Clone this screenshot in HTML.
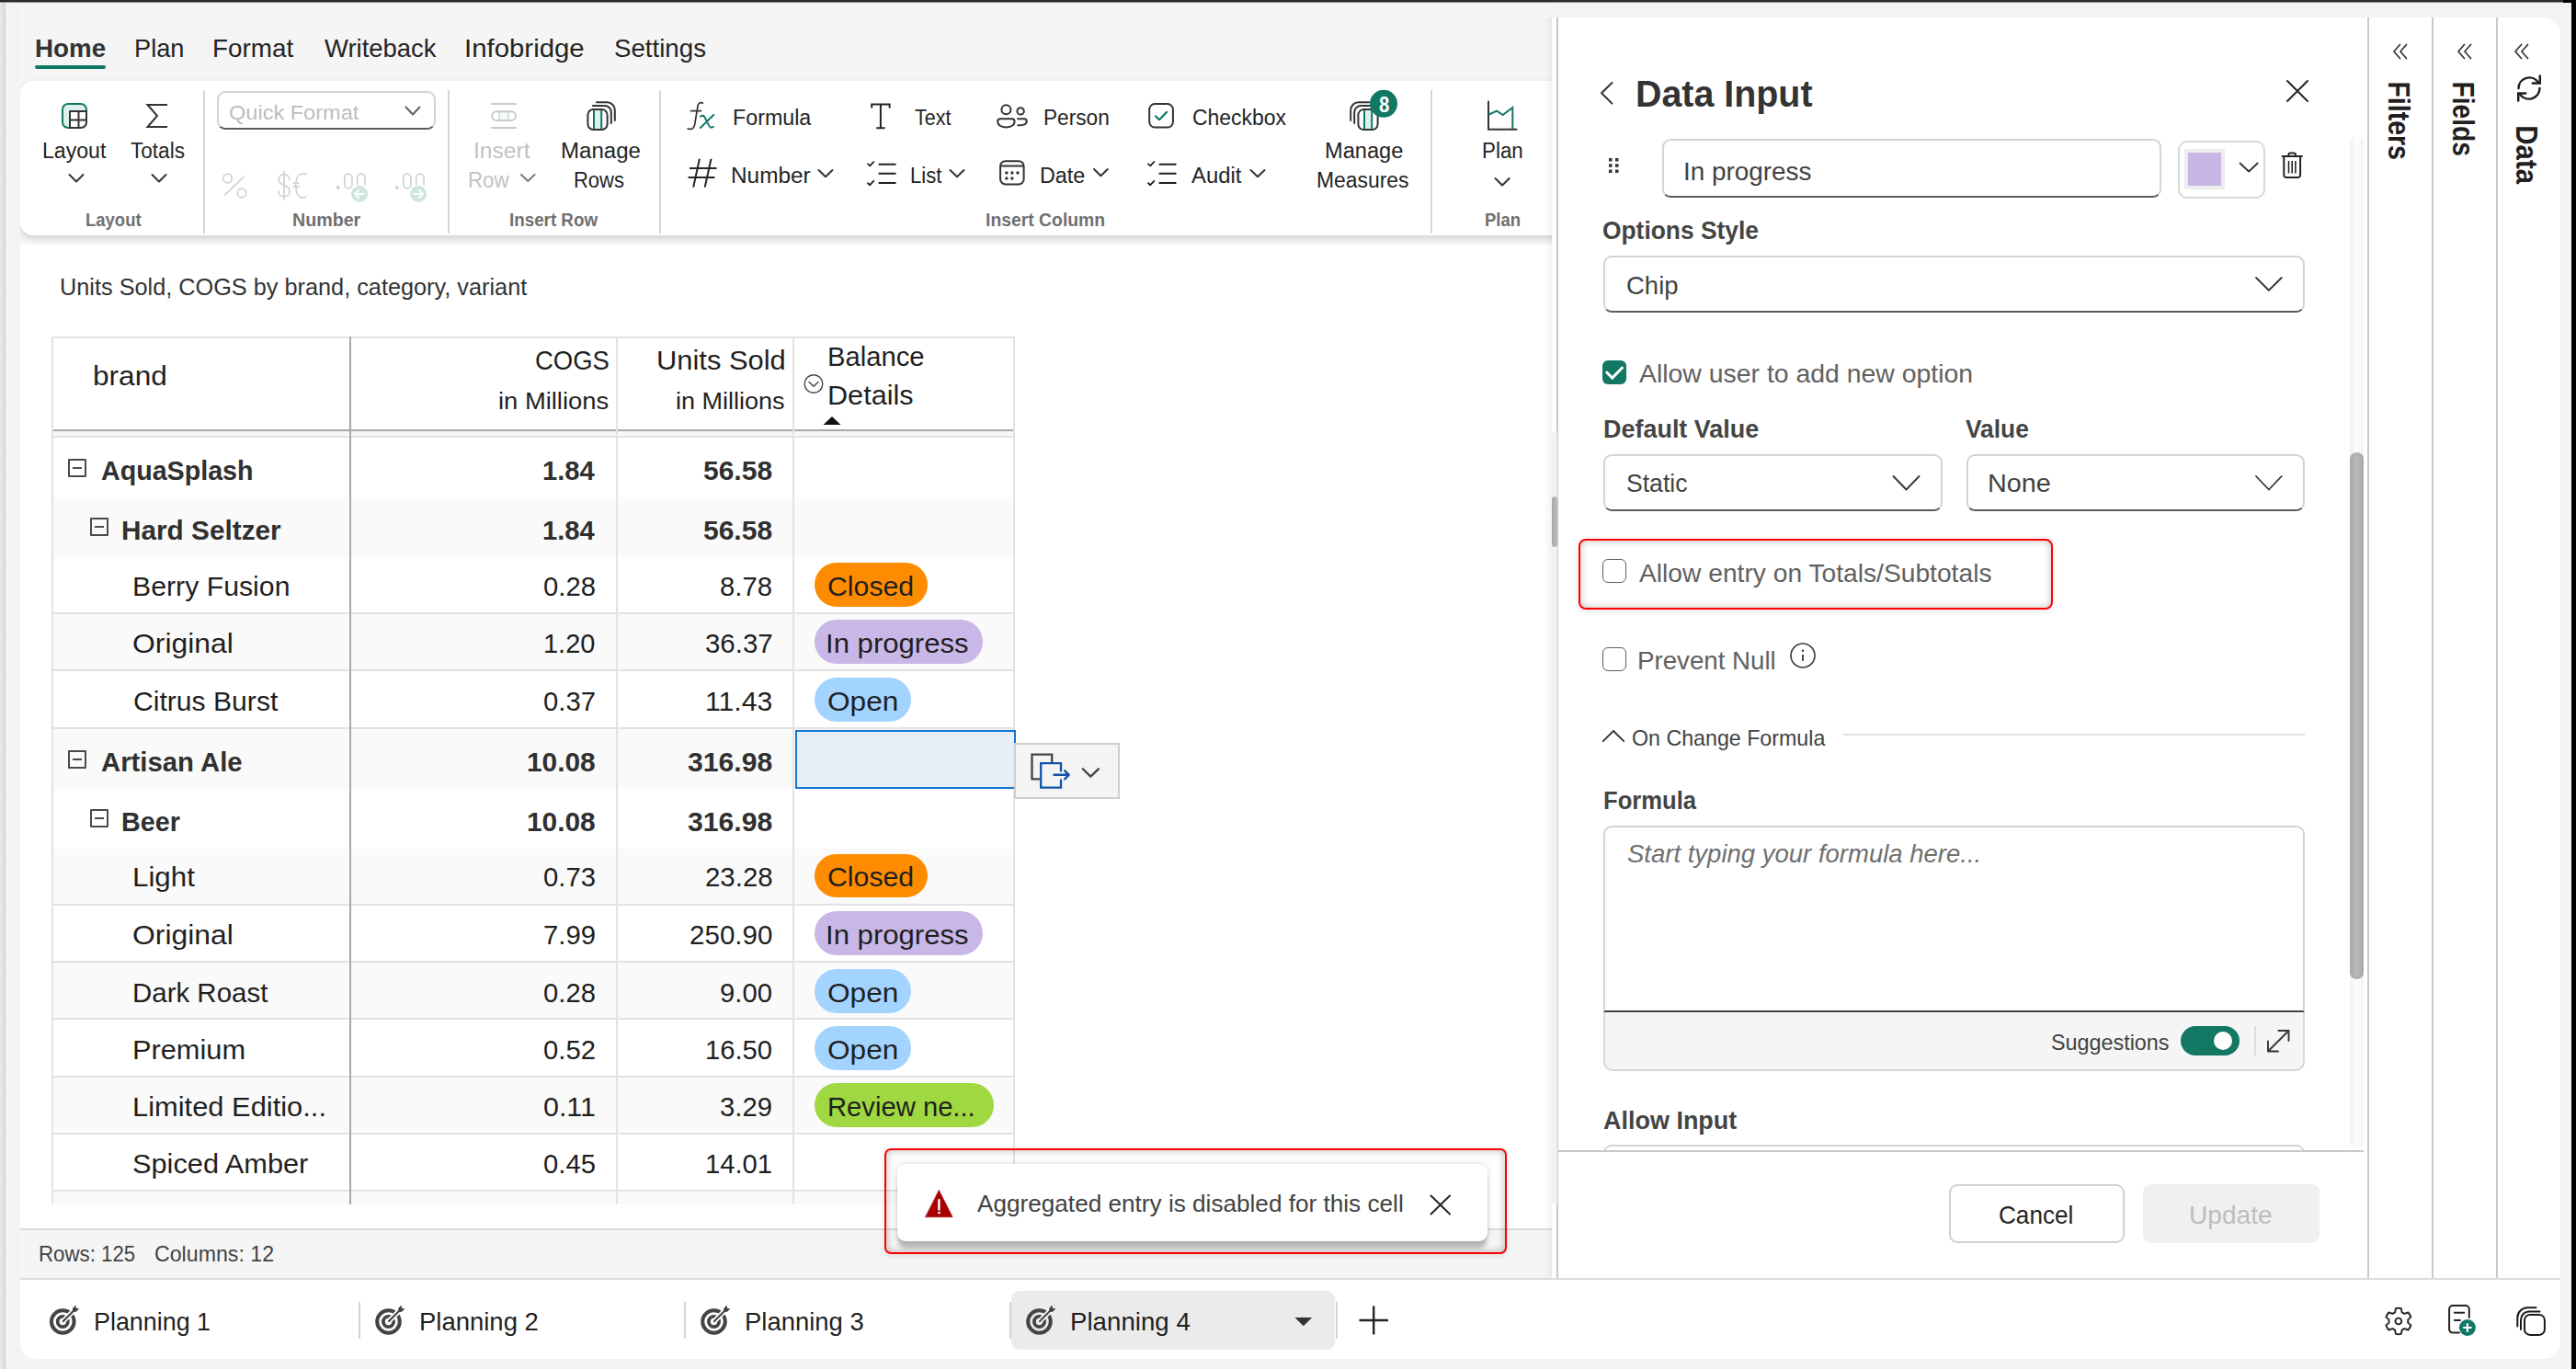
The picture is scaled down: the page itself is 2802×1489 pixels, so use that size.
<!DOCTYPE html>
<html><head><meta charset="utf-8"><title>Planning</title><style>
html,body{margin:0;padding:0;}
body{width:2802px;height:1489px;overflow:hidden;position:relative;background:#f3f3f3;font-family:"Liberation Sans", sans-serif;}
body>div,body>svg,body>span{position:absolute;box-sizing:border-box;}
.t{white-space:nowrap;transform-origin:0 50%;display:block;}
</style></head>
<body>
<div style="left:0px;top:0px;width:6px;height:1489px;background:linear-gradient(90deg,#e9e9e9,#e2e2e2 50%,#d4d4d4);"></div>
<div style="left:22px;top:3px;width:1666px;height:263px;background:#f5f5f5;"></div>
<div style="left:22px;top:70px;width:1666px;height:196px;overflow:hidden;"><div style="position:absolute;left:0;top:18px;width:1700px;height:168px;background:#fff;border-radius:14px 0 0 14px;box-shadow:0 3px 7px rgba(0,0,0,.15);"></div></div>
<div style="left:22px;top:266px;width:1666px;height:1072px;background:#fff;"></div>
<div style="left:22px;top:1336px;width:1666px;height:56px;background:#f5f5f5;border-top:2px solid #dcdcdc;border-bottom:2px solid #dcdcdc;"></div>
<div style="left:22px;top:1392px;width:2763px;height:86px;background:#fff;border-radius:0 0 18px 16px;"></div>
<div style="left:38px;top:71px;width:77px;height:4px;background:#117865;border-radius:2px;"></div>
<div style="left:221px;top:98px;width:2px;height:156px;background:#d6d6d6;"></div>
<div style="left:487px;top:98px;width:2px;height:156px;background:#d6d6d6;"></div>
<div style="left:717px;top:98px;width:2px;height:156px;background:#d6d6d6;"></div>
<div style="left:1556px;top:98px;width:2px;height:156px;background:#d6d6d6;"></div>
<div style="left:235.5px;top:99px;width:238.5px;height:42px;background:#fff;border:2px solid #d4d4d4;border-bottom-color:#5c5c5c;border-radius:9px;"></div>
<div style="left:58px;top:476px;width:1044px;height:65px;background:#fff;"></div>
<div style="left:58px;top:541px;width:1044px;height:65px;background:#fafafa;"></div>
<div style="left:58px;top:606px;width:1044px;height:62px;background:#fff;border-bottom:2px solid #e3e3e3;"></div>
<div style="left:58px;top:668px;width:1044px;height:62px;background:#fafafa;border-bottom:2px solid #e3e3e3;"></div>
<div style="left:58px;top:730px;width:1044px;height:63px;background:#fff;border-bottom:2px solid #e3e3e3;"></div>
<div style="left:58px;top:793px;width:1044px;height:65px;background:#fafafa;"></div>
<div style="left:58px;top:858px;width:1044px;height:65px;background:#fff;"></div>
<div style="left:58px;top:923px;width:1044px;height:62px;background:#fafafa;border-bottom:2px solid #e3e3e3;"></div>
<div style="left:58px;top:985px;width:1044px;height:62px;background:#fff;border-bottom:2px solid #e3e3e3;"></div>
<div style="left:58px;top:1047px;width:1044px;height:62px;background:#fafafa;border-bottom:2px solid #e3e3e3;"></div>
<div style="left:58px;top:1109px;width:1044px;height:63px;background:#fff;border-bottom:2px solid #e3e3e3;"></div>
<div style="left:58px;top:1172px;width:1044px;height:62px;background:#fafafa;border-bottom:2px solid #e3e3e3;"></div>
<div style="left:58px;top:1234px;width:1044px;height:62px;background:#fff;border-bottom:2px solid #e3e3e3;"></div>
<div style="left:58px;top:1296px;width:1044px;height:14px;background:#fafafa;"></div>
<div style="left:58px;top:469px;width:1044px;height:5px;background:#f7f7f7;"></div>
<div style="left:56px;top:474px;width:1048px;height:2px;background:#e3e3e3;"></div>
<div style="left:56px;top:467px;width:1048px;height:2px;background:#a8a8a8;"></div>
<div style="left:56px;top:366px;width:1048px;height:2px;background:#e3e3e3;"></div>
<div style="left:56px;top:366px;width:2px;height:944px;background:#e3e3e3;"></div>
<div style="left:1102px;top:366px;width:2px;height:944px;background:#e3e3e3;"></div>
<div style="left:670px;top:366px;width:2px;height:944px;background:#e3e3e3;"></div>
<div style="left:862px;top:366px;width:2px;height:944px;background:#e3e3e3;"></div>
<div style="left:380px;top:366px;width:2px;height:944px;background:#a8a8a8;"></div>
<div style="left:1100px;top:1404px;width:352px;height:64px;background:#ebebeb;border-radius:9px;"></div>
<div style="left:390px;top:1416px;width:2px;height:40px;background:#d4d4d4;"></div>
<div style="left:744px;top:1416px;width:2px;height:40px;background:#d4d4d4;"></div>
<div style="left:1098px;top:1416px;width:2px;height:40px;background:#d4d4d4;"></div>
<div style="left:1453px;top:1416px;width:2px;height:40px;background:#d4d4d4;"></div>
<div style="left:1688px;top:19px;width:1097px;height:1373px;background:#fff;border-radius:0 18px 0 0;"></div>
<div style="left:1680px;top:19px;width:8px;height:1371px;background:linear-gradient(90deg,rgba(0,0,0,0),rgba(0,0,0,.05));"></div>
<div style="left:1693px;top:19px;width:2px;height:1372px;background:#c8c8c8;"></div>
<div style="left:2575px;top:19px;width:2px;height:1372px;background:#cacaca;"></div>
<div style="left:2645px;top:19px;width:2px;height:1372px;background:#cacaca;"></div>
<div style="left:2715px;top:19px;width:2px;height:1372px;background:#cacaca;"></div>
<div style="left:1688px;top:469px;width:5.5px;height:841px;background:#f2f2f2;border-radius:3px;"></div>
<div style="left:1688px;top:539.5px;width:5.5px;height:55px;background:linear-gradient(90deg,#a9a9a9,#bcbcbc);border-radius:3px;"></div>
<div style="left:1807.5px;top:151px;width:543.5px;height:63.5px;background:#fff;border:2px solid #d4d4d4;border-bottom-color:#5c5c5c;border-radius:9px;"></div>
<div style="left:2368.5px;top:152.5px;width:95px;height:63px;background:#fff;border:2px solid #d8d8d8;border-radius:10px;"></div>
<div style="left:2376px;top:162px;width:44px;height:44px;background:#ededed;"></div>
<div style="left:2380px;top:166px;width:36px;height:36px;background:#c8b6e4;"></div>
<div style="left:1743.5px;top:278px;width:763.5px;height:61.5px;background:#fff;border:2px solid #d4d4d4;border-bottom-color:#5c5c5c;border-radius:9px;"></div>
<div style="left:1743px;top:392px;width:26px;height:26px;background:#127864;border-radius:6px;"></div>
<div style="left:1743.5px;top:493.5px;width:369.5px;height:62.5px;background:#fff;border:2px solid #d4d4d4;border-bottom-color:#5c5c5c;border-radius:9px;"></div>
<div style="left:2138.5px;top:493.5px;width:368.5px;height:62.5px;background:#fff;border:2px solid #d4d4d4;border-bottom-color:#5c5c5c;border-radius:9px;"></div>
<div style="left:1716.5px;top:586px;width:516px;height:77px;border:2px solid #ff0000;border-radius:8px;box-shadow:0 0 8px rgba(0,0,0,.25) inset, 0 2px 6px rgba(0,0,0,.10);"></div>
<div style="left:1743px;top:608px;width:26px;height:26px;background:#fff;border:1.500px solid #616161;border-radius:6px;"></div>
<div style="left:1743px;top:704px;width:26px;height:26px;background:#fff;border:1.500px solid #616161;border-radius:6px;"></div>
<div style="left:2005px;top:798px;width:502px;height:2px;background:#e0e0e0;"></div>
<div style="left:1743.5px;top:1100px;width:763.5px;height:64.5px;background:#f5f5f5;border:2px solid #d8d8d8;border-top:none;border-radius:0 0 10px 10px;"></div>
<div style="left:1743.5px;top:897.5px;width:763.5px;height:203.5px;background:#fff;border:2px solid #d4d4d4;border-bottom:2px solid #424242;border-radius:9px 9px 0 0;"></div>
<div style="left:2371.5px;top:1116px;width:64.5px;height:32px;background:#127864;border-radius:16px;"></div>
<div style="left:2408px;top:1122px;width:20px;height:20px;background:#fff;border-radius:10px;"></div>
<div style="left:2452px;top:1116px;width:2px;height:32px;background:#dcdcdc;"></div>
<div style="left:1743.5px;top:1245px;width:763.5px;height:30px;background:#fff;border:2px solid #d4d4d4;border-radius:9px;"></div>
<div style="left:2556px;top:147.5px;width:14.5px;height:1101.5px;background:linear-gradient(90deg,#f1f1f1,#fcfcfc 40%,#fcfcfc 60%,#f1f1f1);border-radius:7px;"></div>
<div style="left:2556px;top:492px;width:14.5px;height:573px;background:linear-gradient(90deg,#a8a8a8,#b8b8b8 50%,#a8a8a8);border-radius:7px;"></div>
<div style="left:886px;top:612.0px;width:123px;height:47.5px;background:#ff8c00;border-radius:24px;"></div>
<div style="left:886px;top:674.0px;width:183px;height:47.5px;background:#c9b8e7;border-radius:24px;"></div>
<div style="left:886px;top:737.0px;width:104.75px;height:47.5px;background:#a3d4ff;border-radius:24px;"></div>
<div style="left:886px;top:928.5px;width:123px;height:47.5px;background:#ff8c00;border-radius:24px;"></div>
<div style="left:886px;top:991.0px;width:183px;height:47.5px;background:#c9b8e7;border-radius:24px;"></div>
<div style="left:886px;top:1054.0px;width:104.75px;height:47.5px;background:#a3d4ff;border-radius:24px;"></div>
<div style="left:886px;top:1116.0px;width:104.75px;height:47.5px;background:#a3d4ff;border-radius:24px;"></div>
<div style="left:886px;top:1178.0px;width:194.5px;height:47.5px;background:#9fd840;border-radius:24px;"></div>
<div style="left:865px;top:794px;width:240px;height:64px;background:#e7eef8;border:2px solid #0f78d4;"></div>
<div style="left:1103px;top:808px;width:114.5px;height:61px;background:#f4f4f4;border:2px solid #cfcfcf;"></div>
<div style="left:1695px;top:1251px;width:880px;height:141px;background:#fff;"></div>
<div style="left:1695px;top:1251px;width:876px;height:2px;background:#c8c8c8;"></div>
<div style="left:2120px;top:1288px;width:190.5px;height:63.5px;background:#fff;border:2px solid #d1d1d1;border-radius:9px;"></div>
<div style="left:2331px;top:1288px;width:192px;height:63.5px;background:#f0f0f0;border-radius:9px;"></div>
<div style="left:1688px;top:1390px;width:1097px;height:2px;background:#dcdcdc;"></div>
<span class="t" style="left:38.01px;top:35px;font-size:28px;line-height:35px;color:#333;font-weight:700;transform:scaleX(0.9905);">Home</span>
<span class="t" style="left:146.06px;top:35px;font-size:28px;line-height:35px;color:#242424;transform:scaleX(0.9720);">Plan</span>
<span class="t" style="left:230.51px;top:35px;font-size:28px;line-height:35px;color:#242424;transform:scaleX(0.9954);">Format</span>
<span class="t" style="left:352.50px;top:35px;font-size:28px;line-height:35px;color:#242424;transform:scaleX(0.9803);">Writeback</span>
<span class="t" style="left:505.40px;top:35px;font-size:28px;line-height:35px;color:#242424;transform:scaleX(1.0495);">Infobridge</span>
<span class="t" style="left:668.01px;top:35px;font-size:28px;line-height:35px;color:#242424;transform:scaleX(0.9882);">Settings</span>
<span class="t" style="left:46.00px;top:149px;font-size:23px;line-height:30px;color:#242424;transform:scaleX(1.0049);">Layout</span>
<span class="t" style="left:142.00px;top:149px;font-size:23px;line-height:30px;color:#242424;transform:scaleX(0.9818);">Totals</span>
<span class="t" style="left:248.95px;top:108px;font-size:22.5px;line-height:29px;color:#bdbdbd;transform:scaleX(1.0462);">Quick Format</span>
<span class="t" style="left:93.08px;top:226px;font-size:20px;line-height:26px;color:#707070;font-weight:700;transform:scaleX(0.9245);">Layout</span>
<span class="t" style="left:318.02px;top:226px;font-size:20px;line-height:26px;color:#707070;font-weight:700;transform:scaleX(0.9828);">Number</span>
<span class="t" style="left:554.06px;top:226px;font-size:20px;line-height:26px;color:#707070;font-weight:700;transform:scaleX(0.9392);">Insert Row</span>
<span class="t" style="left:1072.03px;top:226px;font-size:20px;line-height:26px;color:#707070;font-weight:700;transform:scaleX(0.9680);">Insert Column</span>
<span class="t" style="left:1615.08px;top:226px;font-size:20px;line-height:26px;color:#707070;font-weight:700;transform:scaleX(0.9245);">Plan</span>
<span class="t" style="left:515.36px;top:149px;font-size:23px;line-height:30px;color:#c2c2c2;transform:scaleX(1.0689);">Insert</span>
<span class="t" style="left:509.03px;top:181px;font-size:23px;line-height:30px;color:#c2c2c2;transform:scaleX(0.9691);">Row</span>
<span class="t" style="left:609.95px;top:149px;font-size:23px;line-height:30px;color:#242424;transform:scaleX(1.0452);">Manage</span>
<span class="t" style="left:623.54px;top:181px;font-size:23px;line-height:30px;color:#242424;transform:scaleX(0.9552);">Rows</span>
<span class="t" style="left:796.99px;top:113px;font-size:23px;line-height:30px;color:#242424;transform:scaleX(1.0112);">Formula</span>
<span class="t" style="left:995.00px;top:113px;font-size:23px;line-height:30px;color:#242424;transform:scaleX(0.9348);">Text</span>
<span class="t" style="left:1135.02px;top:113px;font-size:23px;line-height:30px;color:#242424;transform:scaleX(0.9848);">Person</span>
<span class="t" style="left:1296.50px;top:113px;font-size:23px;line-height:30px;color:#242424;transform:scaleX(0.9973);">Checkbox</span>
<span class="t" style="left:794.94px;top:176px;font-size:23px;line-height:30px;color:#242424;transform:scaleX(1.0599);">Number</span>
<span class="t" style="left:990.04px;top:176px;font-size:23px;line-height:30px;color:#242424;transform:scaleX(0.9604);">List</span>
<span class="t" style="left:1131.48px;top:176px;font-size:23px;line-height:30px;color:#242424;transform:scaleX(1.0151);">Date</span>
<span class="t" style="left:1296.00px;top:176px;font-size:23px;line-height:30px;color:#242424;transform:scaleX(1.0371);">Audit</span>
<span class="t" style="left:1441.47px;top:149px;font-size:23px;line-height:30px;color:#242424;transform:scaleX(1.0267);">Manage</span>
<span class="t" style="left:1432.00px;top:181px;font-size:23px;line-height:30px;color:#242424;transform:scaleX(0.9951);">Measures</span>
<span class="t" style="left:1612.03px;top:149px;font-size:23px;line-height:30px;color:#242424;transform:scaleX(0.9719);">Plan</span>
<span class="t" style="left:65.06px;top:295px;font-size:26px;line-height:34px;color:#333;transform:scaleX(0.9724);">Units Sold, COGS by brand, category, variant</span>
<span class="t" style="left:101.45px;top:390px;font-size:30px;line-height:37px;color:#1f1f1f;transform:scaleX(1.0534);">brand</span>
<span class="t" style="left:582.08px;top:373px;font-size:30px;line-height:37px;color:#1f1f1f;transform:scaleX(0.9150);">COGS</span>
<span class="t" style="left:542.41px;top:420px;font-size:25px;line-height:32px;color:#1f1f1f;transform:scaleX(1.0947);">in Millions</span>
<span class="t" style="left:713.94px;top:373px;font-size:30px;line-height:37px;color:#1f1f1f;transform:scaleX(1.0297);">Units Sold</span>
<span class="t" style="left:734.92px;top:420px;font-size:25px;line-height:32px;color:#1f1f1f;transform:scaleX(1.0808);">in Millions</span>
<span class="t" style="left:900.05px;top:369px;font-size:30px;line-height:37px;color:#1f1f1f;transform:scaleX(0.9742);">Balance</span>
<span class="t" style="left:899.96px;top:411px;font-size:30px;line-height:37px;color:#1f1f1f;transform:scaleX(1.0203);">Details</span>
<span class="t" style="left:109.50px;top:493px;font-size:30px;line-height:37px;color:#303030;font-weight:700;transform:scaleX(0.9547);">AquaSplash</span>
<span class="t" style="left:590.03px;top:493px;font-size:30px;line-height:37px;color:#303030;font-weight:700;transform:scaleX(0.9705);">1.84</span>
<span class="t" style="left:765.00px;top:493px;font-size:30px;line-height:37px;color:#303030;font-weight:700;">56.58</span>
<span class="t" style="left:131.77px;top:558px;font-size:30px;line-height:37px;color:#303030;font-weight:700;transform:scaleX(0.9920);">Hard Seltzer</span>
<span class="t" style="left:590.03px;top:558px;font-size:30px;line-height:37px;color:#303030;font-weight:700;transform:scaleX(0.9705);">1.84</span>
<span class="t" style="left:765.00px;top:558px;font-size:30px;line-height:37px;color:#303030;font-weight:700;">56.58</span>
<span class="t" style="left:143.98px;top:619px;font-size:30px;line-height:37px;color:#1f1f1f;transform:scaleX(1.0083);">Berry Fusion</span>
<span class="t" style="left:590.78px;top:619px;font-size:30px;line-height:37px;color:#1f1f1f;transform:scaleX(0.9744);">0.28</span>
<span class="t" style="left:783.28px;top:619px;font-size:30px;line-height:37px;color:#1f1f1f;transform:scaleX(0.9744);">8.78</span>
<span class="t" style="left:899.99px;top:619px;font-size:30px;line-height:37px;color:#1f1f1f;transform:scaleX(1.0088);">Closed</span>
<span class="t" style="left:144.44px;top:681px;font-size:30px;line-height:37px;color:#1f1f1f;transform:scaleX(1.0625);">Original</span>
<span class="t" style="left:591.32px;top:681px;font-size:30px;line-height:37px;color:#1f1f1f;transform:scaleX(0.9649);">1.20</span>
<span class="t" style="left:766.52px;top:681px;font-size:30px;line-height:37px;color:#1f1f1f;transform:scaleX(0.9811);">36.37</span>
<span class="t" style="left:898.43px;top:681px;font-size:30px;line-height:37px;color:#1f1f1f;transform:scaleX(1.0369);">In progress</span>
<span class="t" style="left:144.50px;top:744px;font-size:30px;line-height:37px;color:#1f1f1f;transform:scaleX(1.0041);">Citrus Burst</span>
<span class="t" style="left:590.78px;top:744px;font-size:30px;line-height:37px;color:#1f1f1f;transform:scaleX(0.9744);">0.37</span>
<span class="t" style="left:766.99px;top:744px;font-size:30px;line-height:37px;color:#1f1f1f;transform:scaleX(1.0048);">11.43</span>
<span class="t" style="left:899.95px;top:744px;font-size:30px;line-height:37px;color:#1f1f1f;transform:scaleX(1.0537);">Open</span>
<span class="t" style="left:109.50px;top:810px;font-size:30px;line-height:37px;color:#303030;font-weight:700;transform:scaleX(0.9766);">Artisan Ale</span>
<span class="t" style="left:573.01px;top:810px;font-size:30px;line-height:37px;color:#303030;font-weight:700;transform:scaleX(0.9947);">10.08</span>
<span class="t" style="left:748.00px;top:810px;font-size:30px;line-height:37px;color:#303030;font-weight:700;transform:scaleX(1.0047);">316.98</span>
<span class="t" style="left:131.84px;top:875px;font-size:30px;line-height:37px;color:#303030;font-weight:700;transform:scaleX(0.9572);">Beer</span>
<span class="t" style="left:573.01px;top:875px;font-size:30px;line-height:37px;color:#303030;font-weight:700;transform:scaleX(0.9947);">10.08</span>
<span class="t" style="left:748.00px;top:875px;font-size:30px;line-height:37px;color:#303030;font-weight:700;transform:scaleX(1.0047);">316.98</span>
<span class="t" style="left:143.91px;top:935px;font-size:30px;line-height:37px;color:#1f1f1f;transform:scaleX(1.0436);">Light</span>
<span class="t" style="left:590.78px;top:935px;font-size:30px;line-height:37px;color:#1f1f1f;transform:scaleX(0.9744);">0.73</span>
<span class="t" style="left:766.52px;top:935px;font-size:30px;line-height:37px;color:#1f1f1f;transform:scaleX(0.9811);">23.28</span>
<span class="t" style="left:899.99px;top:935px;font-size:30px;line-height:37px;color:#1f1f1f;transform:scaleX(1.0088);">Closed</span>
<span class="t" style="left:144.44px;top:998px;font-size:30px;line-height:37px;color:#1f1f1f;transform:scaleX(1.0625);">Original</span>
<span class="t" style="left:590.78px;top:998px;font-size:30px;line-height:37px;color:#1f1f1f;transform:scaleX(0.9744);">7.99</span>
<span class="t" style="left:749.76px;top:998px;font-size:30px;line-height:37px;color:#1f1f1f;transform:scaleX(0.9853);">250.90</span>
<span class="t" style="left:898.43px;top:998px;font-size:30px;line-height:37px;color:#1f1f1f;transform:scaleX(1.0369);">In progress</span>
<span class="t" style="left:144.04px;top:1061px;font-size:30px;line-height:37px;color:#1f1f1f;transform:scaleX(0.9818);">Dark Roast</span>
<span class="t" style="left:590.78px;top:1061px;font-size:30px;line-height:37px;color:#1f1f1f;transform:scaleX(0.9744);">0.28</span>
<span class="t" style="left:783.28px;top:1061px;font-size:30px;line-height:37px;color:#1f1f1f;transform:scaleX(0.9744);">9.00</span>
<span class="t" style="left:899.95px;top:1061px;font-size:30px;line-height:37px;color:#1f1f1f;transform:scaleX(1.0537);">Open</span>
<span class="t" style="left:143.95px;top:1123px;font-size:30px;line-height:37px;color:#1f1f1f;transform:scaleX(1.0254);">Premium</span>
<span class="t" style="left:590.78px;top:1123px;font-size:30px;line-height:37px;color:#1f1f1f;transform:scaleX(0.9744);">0.52</span>
<span class="t" style="left:767.05px;top:1123px;font-size:30px;line-height:37px;color:#1f1f1f;transform:scaleX(0.9739);">16.50</span>
<span class="t" style="left:899.95px;top:1123px;font-size:30px;line-height:37px;color:#1f1f1f;transform:scaleX(1.0537);">Open</span>
<span class="t" style="left:143.94px;top:1185px;font-size:30px;line-height:37px;color:#1f1f1f;transform:scaleX(1.0286);">Limited Editio...</span>
<span class="t" style="left:590.74px;top:1185px;font-size:30px;line-height:37px;color:#1f1f1f;transform:scaleX(1.0142);">0.11</span>
<span class="t" style="left:783.28px;top:1185px;font-size:30px;line-height:37px;color:#1f1f1f;transform:scaleX(0.9744);">3.29</span>
<span class="t" style="left:899.55px;top:1185px;font-size:30px;line-height:37px;color:#1f1f1f;transform:scaleX(0.9736);">Review ne...</span>
<span class="t" style="left:144.48px;top:1247px;font-size:30px;line-height:37px;color:#1f1f1f;transform:scaleX(1.0244);">Spiced Amber</span>
<span class="t" style="left:590.78px;top:1247px;font-size:30px;line-height:37px;color:#1f1f1f;transform:scaleX(0.9744);">0.45</span>
<span class="t" style="left:767.05px;top:1247px;font-size:30px;line-height:37px;color:#1f1f1f;transform:scaleX(0.9739);">14.01</span>
<span class="t" style="left:42.07px;top:1348px;font-size:24px;line-height:31px;color:#424242;transform:scaleX(0.9282);">Rows: 125</span>
<span class="t" style="left:167.78px;top:1348px;font-size:24px;line-height:31px;color:#424242;transform:scaleX(0.9653);">Columns: 12</span>
<span class="t" style="left:101.78px;top:1420px;font-size:28px;line-height:35px;color:#1f1f1f;transform:scaleX(0.9603);">Planning 1</span>
<span class="t" style="left:455.74px;top:1420px;font-size:28px;line-height:35px;color:#1f1f1f;transform:scaleX(0.9811);">Planning 2</span>
<span class="t" style="left:809.54px;top:1420px;font-size:28px;line-height:35px;color:#1f1f1f;transform:scaleX(0.9807);">Planning 3</span>
<span class="t" style="left:1163.52px;top:1420px;font-size:28px;line-height:35px;color:#1f1f1f;transform:scaleX(0.9884);">Planning 4</span>
<span class="t" style="left:1778.78px;top:78px;font-size:40px;line-height:48px;color:#333;font-weight:700;transform:scaleX(0.9846);">Data Input</span>
<span class="t" style="left:1831.01px;top:169px;font-size:28px;line-height:35px;color:#424242;transform:scaleX(0.9959);">In progress</span>
<span class="t" style="left:1742.82px;top:232px;font-size:28.5px;line-height:36px;color:#444444;font-weight:700;transform:scaleX(0.9253);">Options Style</span>
<span class="t" style="left:1768.52px;top:293px;font-size:28px;line-height:35px;color:#424242;transform:scaleX(0.9819);">Chip</span>
<span class="t" style="left:1782.50px;top:389px;font-size:28px;line-height:35px;color:#616161;transform:scaleX(1.0142);">Allow user to add new option</span>
<span class="t" style="left:1744.05px;top:448px;font-size:28.5px;line-height:36px;color:#444444;font-weight:700;transform:scaleX(0.9457);">Default Value</span>
<span class="t" style="left:2138.00px;top:448px;font-size:28.5px;line-height:36px;color:#444444;font-weight:700;transform:scaleX(0.9237);">Value</span>
<span class="t" style="left:1769.05px;top:508px;font-size:28px;line-height:35px;color:#424242;transform:scaleX(0.9489);">Static</span>
<span class="t" style="left:2162.44px;top:508px;font-size:28px;line-height:35px;color:#424242;transform:scaleX(1.0293);">None</span>
<span class="t" style="left:1782.50px;top:606px;font-size:28px;line-height:35px;color:#616161;transform:scaleX(1.0071);">Allow entry on Totals/Subtotals</span>
<span class="t" style="left:1781.02px;top:701px;font-size:28px;line-height:35px;color:#616161;transform:scaleX(0.9880);">Prevent Null</span>
<span class="t" style="left:1775.03px;top:787px;font-size:24px;line-height:31px;color:#424242;transform:scaleX(0.9673);">On Change Formula</span>
<span class="t" style="left:1744.10px;top:852px;font-size:28.5px;line-height:36px;color:#444444;font-weight:700;transform:scaleX(0.8994);">Formula</span>
<span class="t" style="left:1770.00px;top:911px;font-size:28px;line-height:35px;color:#707070;font-style:italic;transform:scaleX(0.9823);">Start typing your formula here...</span>
<span class="t" style="left:2230.78px;top:1118px;font-size:24px;line-height:31px;color:#424242;transform:scaleX(0.9726);">Suggestions</span>
<span class="t" style="left:1743.75px;top:1200px;font-size:28.5px;line-height:36px;color:#444444;font-weight:700;transform:scaleX(0.9461);">Allow Input</span>
<span class="t" style="left:2173.82px;top:1304px;font-size:28px;line-height:35px;color:#242424;transform:scaleX(0.9330);">Cancel</span>
<span class="t" style="left:2380.99px;top:1304px;font-size:28px;line-height:35px;color:#bdbdbd;transform:scaleX(1.0032);">Update</span>
<span class="t" style="left:0;top:0;font-size:34px;line-height:42px;color:#1f1f1f;font-weight:700;transform-origin:0 0;transform:translate(2598.3px,90.1px) rotate(90deg) scaleX(0.8383) translate(-2.00px,-33.00px);">Filters</span>
<span class="t" style="left:0;top:0;font-size:34px;line-height:42px;color:#1f1f1f;font-weight:700;transform-origin:0 0;transform:translate(2667.8px,90.1px) rotate(90deg) scaleX(0.8297) translate(-2.00px,-33.00px);">Fields</span>
<span class="t" style="left:0;top:0;font-size:34px;line-height:42px;color:#1f1f1f;font-weight:700;transform-origin:0 0;transform:translate(2737.4px,138.1px) rotate(90deg) scaleX(0.8642) translate(-2.00px,-33.00px);">Data</span>
<svg style="left:22px;top:88px" width="1666" height="168" viewBox="22 88 1666 168" fill="none" stroke-linecap="round" stroke-linejoin="round"><rect x="68" y="113" width="26" height="26" rx="6" fill="#dcf0ec" stroke="#117865" stroke-width="2"/><path d="M76 121H95V134a6 6 0 0 1-6 6H76Z" fill="#fff" stroke="none"/><path d="M76 140V121H95M76 130.5H94M85.5 121V139" stroke="#333333" stroke-width="2" stroke-linecap="butt"/><path d="M76 139H88a6 6 0 0 0 6-6V121" stroke="#333333" stroke-width="2" stroke-linecap="butt"/><path d="M75.5 190L83.0 197.5L90.5 190" stroke="#333333" stroke-width="2"/><path d="M182 114H160.5L171 126L160.5 138H182" stroke="#333333" stroke-width="2" stroke-linecap="butt" stroke-linejoin="miter"/><path d="M165.5 190L173.0 197.5L180.5 190" stroke="#333333" stroke-width="2"/><path d="M441.5 116.5L449.0 124.5L456.5 116.5" stroke="#616161" stroke-width="2"/><circle cx="247.5" cy="194" r="4.8" stroke="#d2d2d2" stroke-width="1.7"/><circle cx="263" cy="210" r="4.8" stroke="#d2d2d2" stroke-width="1.7"/><path d="M266 191.5L244 212.5" stroke="#d2d2d2" stroke-width="1.7" stroke-linecap="butt"/><path d="M309 186.5V217M315 195.5c0-3.5-2.6-5.8-6-5.8s-6 2.3-6 5.6c0 3.6 3 5 6 6.2s6 2.800 6 6.400c0 3.400-2.600 5.800-6 5.800s-6-2.400-6-5.800" stroke="#d2d2d2" stroke-width="1.7"/><path d="M333.500 190.200c-1.200-.800-2.600-1.200-4.200-1.200c-5 0-7.600 5.600-7.600 13s2.600 13 7.600 13c1.600 0 3-.400 4.200-1.200M318.500 199.200h7M318.500 202.800h7" stroke="#d2d2d2" stroke-width="1.700" stroke-linecap="butt"/><circle cx="367.8" cy="204" r="2" fill="#d2d2d2" stroke="none"/><rect x="374.8" y="189.200" width="8.200" height="15.600" rx="4.100" stroke="#d2d2d2" stroke-width="1.700"/><path d="M388.7 201.5V193.300a4.200 4.200 0 0 1 8.400 0V201.500" stroke="#d2d2d2" stroke-width="1.700" stroke-linecap="butt"/><circle cx="391" cy="211" r="9" fill="#cfe5df" stroke="none"/><path d="M395.5 211H386.5M390 207L386 211L390 215" stroke="#fff" stroke-width="2"/><circle cx="431.8" cy="204" r="2" fill="#d2d2d2" stroke="none"/><rect x="438.8" y="189.200" width="8.200" height="15.600" rx="4.100" stroke="#d2d2d2" stroke-width="1.700"/><path d="M452.7 201.5V193.300a4.200 4.200 0 0 1 8.400 0V201.500" stroke="#d2d2d2" stroke-width="1.700" stroke-linecap="butt"/><circle cx="455" cy="211" r="9" fill="#cfe5df" stroke="none"/><path d="M450.5 211H459.5M456 207L460 211L456 215" stroke="#fff" stroke-width="2"/><path d="M535 113H561M535 139H561" stroke="#c9c9c9" stroke-width="2"/><rect x="543" y="121" width="10" height="10" fill="#f3faf8" stroke="none"/><path d="M543 121V131M553 121V131" stroke="#c4e0d9" stroke-width="1.600" stroke-linecap="butt"/><rect x="535.2" y="121.2" width="25.8" height="9.800" rx="4.900" stroke="#c9c9c9" stroke-width="2"/><path d="M567 190L574.25 197L581.5 190" stroke="#7a7a7a" stroke-width="2"/><path d="M644.9 115H657.8000000000001a7 7 0 0 1 7 7V134" stroke="#333333" stroke-width="2"/><path d="M648.9 111.2H660.3000000000001a8.500 8.500 0 0 1 8.500 8.500V131" stroke="#333333" stroke-width="2"/><rect x="639.4" y="119" width="21.2" height="22" rx="6" fill="#fff" stroke="none"/><rect x="646.0" y="119" width="8.200" height="22" fill="#dcf0ec" stroke="none"/><path d="M646.0 119V141M654.1999999999999 119V141" stroke="#117865" stroke-width="2" stroke-linecap="butt"/><rect x="639.4" y="119" width="21.2" height="22" rx="6" stroke="#333333" stroke-width="2"/><path d="M764.500 112.200c-3.400-1.800-5.200.600-5.600 3.600l-3.200 19.600c-.600 3.400-2.400 6.200-7.600 4.600M751.500 120.600h11" stroke="#333333" stroke-width="1.700"/><path d="M762 126.600c2.400-1.800 3.600-.800 4.600 1.200l4.600 8.800c1 2 2.600 2.800 4.800 1.200M776.200 125l-14.400 14" stroke="#117865" stroke-width="2"/><path d="M948.200 117.400V113.600H967.600V117.400M957.900 113.600V139.200M953.200 139.200H962.600" stroke="#242424" stroke-width="2" stroke-linecap="butt" stroke-linejoin="miter"/><circle cx="1094.4" cy="119.2" r="5" stroke="#333333" stroke-width="2"/><circle cx="1110.100" cy="120.900" r="3.700" stroke="#333333" stroke-width="2"/><path d="M1088 129.300h12.800a2.800 2.800 0 0 1 2.800 2.800c0 4.200-3.800 6.300-9.200 6.300s-9.200-2.100-9.200-6.300a2.800 2.800 0 0 1 2.800-2.800Z" stroke="#333333" stroke-width="2"/><path d="M1107 129.300h7.200a2.600 2.600 0 0 1 2.600 2.600c0 3-3.600 4.600-9.400 4.300" stroke="#333333" stroke-width="2"/><rect x="1250.200" y="113.100" width="25.700" height="25.500" rx="6" stroke="#333333" stroke-width="2"/><path d="M1257 126.400L1261 130.200L1269.200 121.800" stroke="#117865" stroke-width="2.200"/><path d="M750 183H779.500M748.500 193H777.500M773.500 172.800L766.700 203.600M760.900 172.800L754.200 203.600" stroke="#242424" stroke-width="2" stroke-linecap="butt"/><path d="M890.5 185L898.0 192.2L905.5 185" stroke="#333333" stroke-width="2"/><path d="M955.6 178.800H974.5M955.6 188.800H974.5M955.6 199H974.5" stroke="#1f1f1f" stroke-width="2" stroke-linecap="butt"/><path d="M944 178.400L946.3 180.400L950.3 176M944 199.200L946.3 201.200L950.3 196.800" stroke="#1f1f1f" stroke-width="1.800"/><path d="M1033.5 185L1041.0 192.2L1048.5 185" stroke="#333333" stroke-width="2"/><path d="M1260.6 178.800H1279.5M1260.6 188.800H1279.5M1260.6 199H1279.5" stroke="#1f1f1f" stroke-width="2" stroke-linecap="butt"/><path d="M1249 178.400L1251.3 180.400L1255.3 176M1249 199.200L1251.3 201.200L1255.3 196.800" stroke="#1f1f1f" stroke-width="1.800"/><path d="M1360.5 185L1368.0 192.2L1375.5 185" stroke="#333333" stroke-width="2"/><rect x="1088.100" y="175.200" width="25.500" height="25.200" rx="5.500" stroke="#333333" stroke-width="2"/><path d="M1088.500 180.500H1113.500" stroke="#333333" stroke-width="2" stroke-linecap="butt"/><circle cx="1094.9" cy="188" r="1.700" fill="#333333" stroke="none"/><circle cx="1100.9" cy="188" r="1.700" fill="#333333" stroke="none"/><circle cx="1107" cy="188" r="1.700" fill="#333333" stroke="none"/><circle cx="1094.9" cy="194" r="1.700" fill="#333333" stroke="none"/><circle cx="1100.9" cy="194" r="1.700" fill="#333333" stroke="none"/><path d="M1190 184L1197.4 191.2L1204.8 184" stroke="#333333" stroke-width="2"/><path d="M1493.1000000000001 115.1H1480.2a7 7 0 0 0-7 7V134.1" stroke="#333333" stroke-width="2"/><path d="M1489.1000000000001 111.3H1477.7a8.500 8.500 0 0 0-8.500 8.500V131.1" stroke="#333333" stroke-width="2"/><rect x="1477.4" y="119.1" width="21.2" height="22" rx="6" fill="#fff" stroke="none"/><rect x="1484.0" y="119.1" width="8.200" height="22" fill="#dcf0ec" stroke="none"/><path d="M1484.0 119.1V141.1M1492.2 119.1V141.1" stroke="#117865" stroke-width="2" stroke-linecap="butt"/><rect x="1477.4" y="119.1" width="21.2" height="22" rx="6" stroke="#333333" stroke-width="2"/><circle cx="1505" cy="112.800" r="15" fill="#117865" stroke="none"/><path d="M1619 110.400V140.700H1649.600" stroke="#333333" stroke-width="2" stroke-linejoin="miter"/><path d="M1619.500 124.500L1628.300 120.600L1634.600 125L1645.300 117V140" stroke="#117865" stroke-width="2" stroke-linejoin="miter" stroke-linecap="butt"/><path d="M1626.5 194L1634.1 201.5L1641.7 194" stroke="#333333" stroke-width="2"/></svg>
<svg style="left:22px;top:266px" width="1666" height="1070" viewBox="22 266 1666 1070" fill="none" stroke-linecap="round" stroke-linejoin="round"><rect x="75" y="500" width="18" height="18" stroke="#4a4a4a" stroke-width="2"/><path d="M79 509H89" stroke="#4a4a4a" stroke-width="2" stroke-linecap="butt"/><rect x="99" y="564" width="18" height="18" stroke="#4a4a4a" stroke-width="2"/><path d="M103 573H113" stroke="#4a4a4a" stroke-width="2" stroke-linecap="butt"/><rect x="75" y="817" width="18" height="18" stroke="#4a4a4a" stroke-width="2"/><path d="M79 826H89" stroke="#4a4a4a" stroke-width="2" stroke-linecap="butt"/><rect x="99" y="881" width="18" height="18" stroke="#4a4a4a" stroke-width="2"/><path d="M103 890H113" stroke="#4a4a4a" stroke-width="2" stroke-linecap="butt"/><path d="M1131 847.300H1122.500V820.600H1144.200V829" stroke="#444" stroke-width="2.300" stroke-linejoin="miter" stroke-linecap="butt"/><path d="M1154 838.500V830.100H1132.200V856.700H1154V848.400" stroke="#1352a8" stroke-width="2.300" stroke-linejoin="miter" stroke-linecap="round"/><path d="M1146.500 842.800H1161.500M1158.200 838.300L1162.600 842.800L1158.200 847.300" stroke="#1352a8" stroke-width="2.400" stroke-linejoin="miter"/><path d="M1177.800 836.300L1186.300 844.600L1194.900 836.300" stroke="#444" stroke-width="2.300"/><circle cx="885" cy="417.500" r="9.800" stroke="#444" stroke-width="1.400"/><path d="M880 415.500L885 420.300L890 415.500" stroke="#444" stroke-width="1.400"/><path d="M895.500 462L905 453L914.500 462Z" fill="#111" stroke="none"/></svg>
<svg style="left:22px;top:1392px" width="2763" height="86" viewBox="22 1392 2763 86" fill="none" stroke-linecap="round" stroke-linejoin="round"><circle cx="68.25" cy="1437.5" r="12.300" stroke="#444" stroke-width="4"/><circle cx="68.25" cy="1437.5" r="5.600" stroke="#444" stroke-width="3.800"/><path d="M68.25 1437.5L81.75 1424.0" stroke="#fff" stroke-width="5.500" stroke-linecap="butt"/><path d="M68.75 1437.0L82.25 1423.5" stroke="#444" stroke-width="2.200"/><path d="M78.75 1427.0L79.05 1423.0L82.25 1419.5L82.85 1422.9L86.25 1423.5L82.75 1426.7Z" fill="#444" stroke="none"/><circle cx="422.5" cy="1437.5" r="12.300" stroke="#444" stroke-width="4"/><circle cx="422.5" cy="1437.5" r="5.600" stroke="#444" stroke-width="3.800"/><path d="M422.5 1437.5L436.0 1424.0" stroke="#fff" stroke-width="5.500" stroke-linecap="butt"/><path d="M423.0 1437.0L436.5 1423.5" stroke="#444" stroke-width="2.200"/><path d="M433.0 1427.0L433.3 1423.0L436.5 1419.5L437.1 1422.9L440.5 1423.5L437.0 1426.7Z" fill="#444" stroke="none"/><circle cx="776.5" cy="1437.5" r="12.300" stroke="#444" stroke-width="4"/><circle cx="776.5" cy="1437.5" r="5.600" stroke="#444" stroke-width="3.800"/><path d="M776.5 1437.5L790.0 1424.0" stroke="#fff" stroke-width="5.500" stroke-linecap="butt"/><path d="M777.0 1437.0L790.5 1423.5" stroke="#444" stroke-width="2.200"/><path d="M787.0 1427.0L787.3 1423.0L790.5 1419.5L791.1 1422.9L794.5 1423.5L791.0 1426.7Z" fill="#444" stroke="none"/><circle cx="1130.5" cy="1437.5" r="12.300" stroke="#444" stroke-width="4"/><circle cx="1130.5" cy="1437.5" r="5.600" stroke="#444" stroke-width="3.800"/><path d="M1130.5 1437.5L1144.0 1424.0" stroke="#fff" stroke-width="5.500" stroke-linecap="butt"/><path d="M1131.0 1437.0L1144.5 1423.5" stroke="#444" stroke-width="2.200"/><path d="M1141.0 1427.0L1141.3 1423.0L1144.5 1419.5L1145.1 1422.9L1148.5 1423.5L1145.0 1426.7Z" fill="#444" stroke="none"/><path d="M1408.500 1433H1427.200L1417.800 1442.200Z" fill="#333" stroke="none"/><path d="M1478.500 1436H1510M1494.200 1420.500V1451.500" stroke="#242424" stroke-width="2.400" stroke-linecap="butt"/><path d="M2605.17 1427.29L2605.95 1423.11A14.2 14.2 0 0 1 2611.85 1423.11L2612.63 1427.29A10.4 10.4 0 0 1 2615.44 1428.92L2619.45 1427.50A14.2 14.2 0 0 1 2622.41 1432.61L2619.17 1435.37A10.4 10.4 0 0 1 2619.17 1438.63L2622.41 1441.39A14.2 14.2 0 0 1 2619.45 1446.50L2615.44 1445.08A10.4 10.4 0 0 1 2612.63 1446.71L2611.85 1450.89A14.2 14.2 0 0 1 2605.95 1450.89L2605.17 1446.71A10.4 10.4 0 0 1 2602.36 1445.08L2598.35 1446.50A14.2 14.2 0 0 1 2595.39 1441.39L2598.63 1438.63A10.4 10.4 0 0 1 2598.63 1435.37L2595.39 1432.61A14.2 14.2 0 0 1 2598.35 1427.50L2602.36 1428.92A10.4 10.4 0 0 1 2605.17 1427.29Z" stroke="#242424" stroke-width="1.900" stroke-linejoin="round"/><circle cx="2608.900" cy="1437" r="3.400" stroke="#242424" stroke-width="1.900"/><path d="M2675 1449.600H2668.100a4 4 0 0 1-4-4V1424a4 4 0 0 1 4-4H2681.800a4 4 0 0 1 4 4V1433" stroke="#242424" stroke-width="2"/><path d="M2669.800 1427.800H2680.200M2669.800 1436H2676" stroke="#242424" stroke-width="2"/><circle cx="2683.900" cy="1444" r="9" fill="#117865" stroke="none"/><path d="M2679.200 1444H2688.600M2683.900 1439.300V1448.700" stroke="#fff" stroke-width="2.200" stroke-linecap="butt"/><path d="M2762.500 1426.400H2751a9 9 0 0 0-9 9V1446M2758.500 1422.300H2749.300a11 11 0 0 0-11 11V1442.500" stroke="#1a1a1a" stroke-width="2"/><rect x="2746" y="1429.900" width="21.900" height="22" rx="6" fill="#fff" stroke="#1a1a1a" stroke-width="2"/></svg>
<svg style="left:1688px;top:19px" width="1097" height="1373" viewBox="1688 19 1097 1373" fill="none" stroke-linecap="round" stroke-linejoin="round"><path d="M1753.500 90L1742 101.300L1753.500 112.600" stroke="#333" stroke-width="2"/><path d="M2488 88L2510 110M2510 88L2488 110" stroke="#242424" stroke-width="2"/><rect x="1750" y="172" width="3.500" height="3.500" fill="#333" stroke="none"/><rect x="1750" y="178.3" width="3.500" height="3.500" fill="#333" stroke="none"/><rect x="1750" y="184.5" width="3.500" height="3.500" fill="#333" stroke="none"/><rect x="1757" y="172" width="3.500" height="3.500" fill="#333" stroke="none"/><rect x="1757" y="178.3" width="3.500" height="3.500" fill="#333" stroke="none"/><rect x="1757" y="184.5" width="3.500" height="3.500" fill="#333" stroke="none"/><path d="M2436.5 177.5L2446.1 186.5L2455.7 177.5" stroke="#333" stroke-width="1.8"/><path d="M2482.500 170H2504M2489.400 170V168.500a2 2 0 0 1 2-2H2495a2 2 0 0 1 2 2V170M2484.300 170.500V190.500a2.500 2.500 0 0 0 2.500 2.500H2499.600a2.500 2.500 0 0 0 2.500-2.500V170.500" stroke="#242424" stroke-width="2"/><path d="M2489.500 175V188.500M2493.200 175V188.500M2496.900 175V188.500" stroke="#242424" stroke-width="1.600" stroke-linecap="butt"/><path d="M2454 302L2467.875 315.75L2481.75 302" stroke="#333" stroke-width="1.8"/><path d="M1747 404.300L1753.700 411L1765.300 399.300" stroke="#fff" stroke-width="3" stroke-linecap="butt" stroke-linejoin="miter"/><path d="M2059.5 518L2073.5 532.5L2087.5 518" stroke="#333" stroke-width="1.8"/><path d="M2454 518L2467.875 532.5L2481.75 518" stroke="#333" stroke-width="1.8"/><circle cx="1961" cy="713" r="13" stroke="#424242" stroke-width="1.700"/><path d="M1961 712V719" stroke="#424242" stroke-width="1.900" stroke-linecap="butt"/><circle cx="1961" cy="707.800" r="1.300" fill="#424242" stroke="none"/><path d="M1743.800 806.200L1755 795L1766.200 806.200" stroke="#333" stroke-width="1.800"/><path d="M2467 1143.500L2489.500 1121M2478.500 1121H2489.500V1132M2467 1132.500V1143.500H2478" stroke="#333" stroke-width="1.900"/><path d="M2610.5 48.5L2604 56.0L2610.5 63.5M2617.5 48.5L2611 56.0L2617.5 63.5" stroke="#333" stroke-width="1.700"/><path d="M2680.5 48.5L2674 56.0L2680.5 63.5M2687.5 48.5L2681 56.0L2687.5 63.5" stroke="#333" stroke-width="1.700"/><path d="M2742.5 48.5L2736 56.0L2742.5 63.5M2749.5 48.5L2743 56.0L2749.5 63.5" stroke="#333" stroke-width="1.700"/><path d="M2762.500 96a11.800 11.800 0 0 1-21.500 6.500M2739.500 96a11.800 11.800 0 0 1 21.500-6.500" stroke="#1f1f1f" stroke-width="2.500"/><path d="M2762.800 82.500V90.500H2754.800M2739.200 109.500V101.500H2747.200" stroke="#1f1f1f" stroke-width="2.500" stroke-linejoin="miter"/></svg>
<span class="t" style="left:1499.50px;top:99px;font-size:23px;line-height:30px;color:#fff;font-weight:700;transform:scaleX(0.8846);">8</span>
<div style="left:962px;top:1249px;width:676.5px;height:115px;border:2px solid #ff0000;border-radius:7px;box-shadow:0 0 10px rgba(0,0,0,.28) inset, 0 2px 6px rgba(0,0,0,.10);"></div>
<div style="left:976px;top:1265.5px;width:641.5px;height:84.5px;background:#fff;border-radius:9px;box-shadow:0 9px 4px -1px rgba(0,0,0,.22),0 0 7px rgba(0,0,0,.16);"></div>
<svg style="left:1000px;top:1290px" width="600" height="40" viewBox="1000 1290 600 40" fill="none" stroke-linecap="round" stroke-linejoin="round"><path d="M1021.400 1294.500L1036.200 1323.800H1006.600Z" fill="#a80000" stroke="#a80000" stroke-width=".5" stroke-linejoin="miter"/><path d="M1021.400 1304.200V1316.400M1021.400 1318V1320.300" stroke="#fff" stroke-width="2.400" stroke-linecap="butt"/><path d="M1556.500 1300.500L1577 1320.500M1577 1300.500L1556.500 1320.500" stroke="#242424" stroke-width="2"/></svg>
<span class="t" style="left:1063.00px;top:1293px;font-size:25.5px;line-height:32px;color:#424242;transform:scaleX(1.0255);">Aggregated entry is disabled for this cell</span>
<div style="left:0px;top:0px;width:2802px;height:3px;background:linear-gradient(#2b2a29 0,#2b2a29 2px,#8f8e8d 2px,#8f8e8d 3px);"></div>
<div style="left:2788px;top:0px;width:14px;height:3px;background:#000;"></div>
<div style="left:2797px;top:0px;width:5px;height:1489px;background:#000;"></div>
</body></html>
